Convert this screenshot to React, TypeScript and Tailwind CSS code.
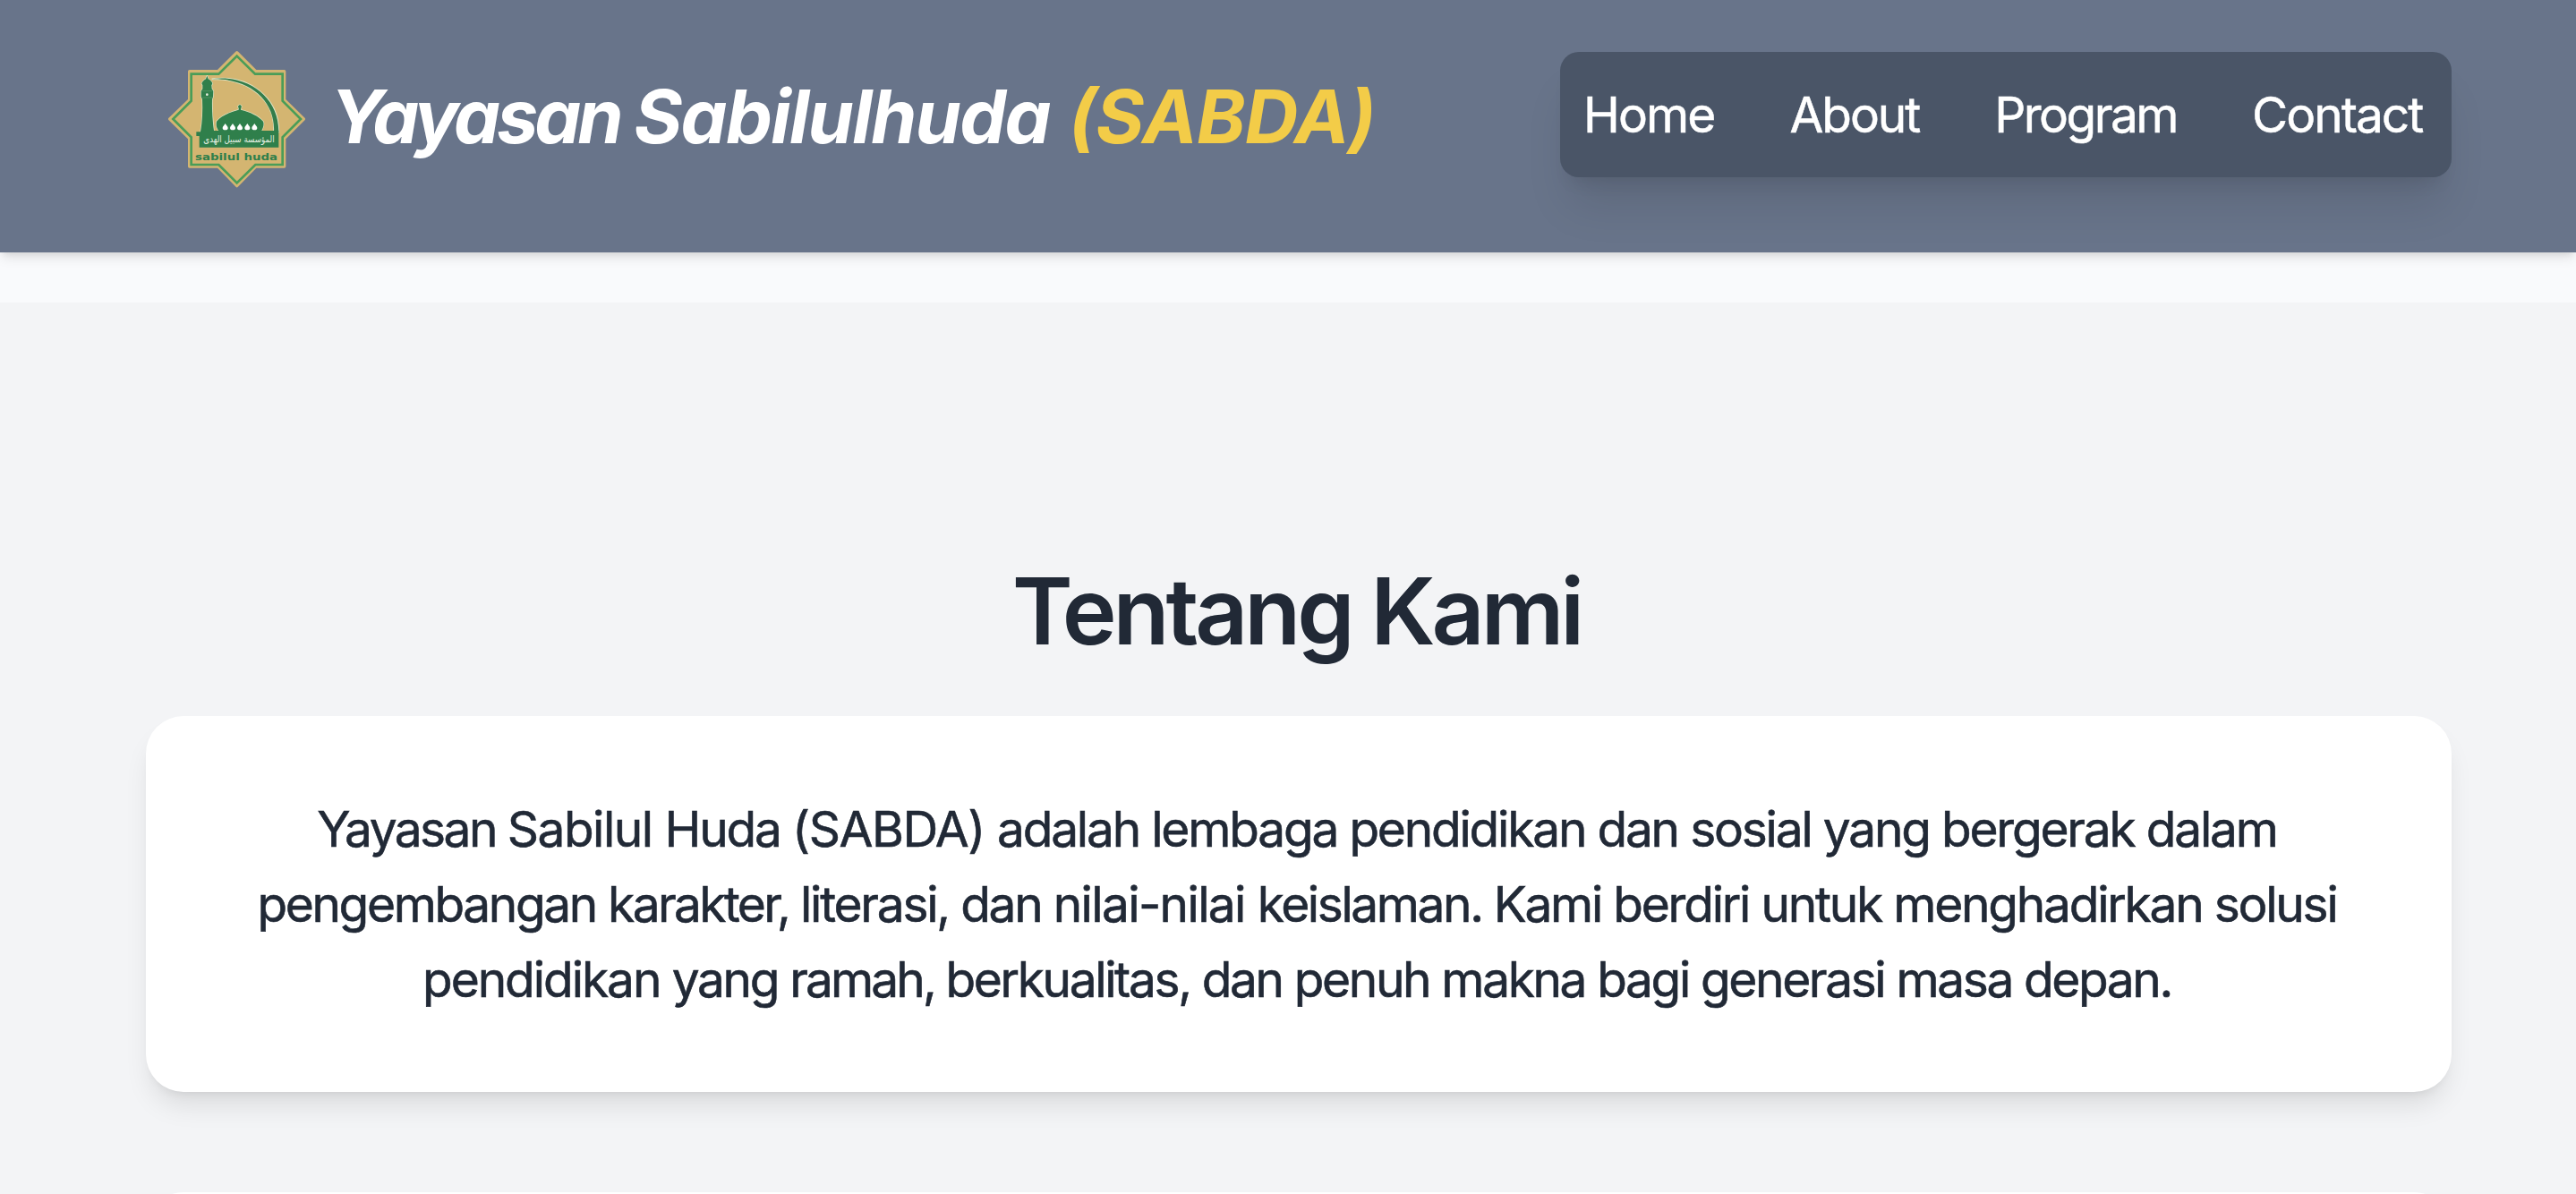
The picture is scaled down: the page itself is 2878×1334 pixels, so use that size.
import type { ReactNode } from "react";

function Logo() {
  return (
    <svg viewBox="54 48 462 462" className="h-[154px] w-[154px] shrink-0" role="img" aria-label="Logo Sabilul Huda">
      <path
        d="M284 56 347 119H443V215L508 279 443 344V438H347L284 503 221 438H125V344L59 279 125 215V119H221Z"
        fill="#d4b571"
        stroke="#d4b571"
        strokeWidth="10"
        strokeLinejoin="round"
      />
      <path
        d="M284 68 345 128H437V218L498 279 437 340V432H346L284 493 223 432H131V340L70 279 131 218V128H223Z"
        fill="none"
        stroke="#4a9d58"
        strokeWidth="8"
      />
      {/* crescent arch */}
      <path
        d="M200 145C320 128 425 205 424 322H408C414 220 330 142 200 145Z"
        fill="#347d4b"
        stroke="#dfe5c6"
        strokeWidth="5"
      />
      <path d="M200 145C320 128 425 205 424 322H408C414 220 330 142 200 145Z" fill="#347d4b" />
      {/* minaret and dome */}
      <g fill="#2f7f4b" stroke="#dfe5c6" strokeWidth="4" strokeLinejoin="round" className="[paint-order:stroke]">
        <path d="M184 134 188 145C196 149 200 154 202 160L199 166 200 178 205 185 204 205 201 212C200 250 203 288 207 318V336H162V322C168 288 170 250 168 212L164 205V185L169 178V166L166 160C168 154 173 149 180 145Z" />
        <path d="M294 231C299 233 301 238 298 242L297 248C328 256 356 268 372 287C376 297 372 309 366 320H224C214 307 214 297 216 287C232 268 260 256 290 248L290 242C286 238 289 233 294 231Z" />
      </g>
      <path d="M148 322H162L164 318H424V374H158V336H148Z" fill="#2f7f4b" />
      <path d="M166 185H203M167 207H203" stroke="#5f9c69" strokeWidth="2" />
      <circle cx="184" cy="197" r="4" fill="#e8eee0" />
      <g fill="#ffffff">
        <path d="M245 294C249 301 254 304 254 309A9 7 0 0 1 236 309C236 304 241 301 245 294Z" />
        <path d="M270 294C274 301 279 304 279 309A9 7 0 0 1 261 309C261 304 266 301 270 294Z" />
        <path d="M294 294C298 301 303 304 303 309A9 7 0 0 1 285 309C285 304 290 301 294 294Z" />
        <path d="M319 294C323 301 328 304 328 309A9 7 0 0 1 310 309C310 304 315 301 319 294Z" />
        <path d="M343 294C347 301 352 304 352 309A9 7 0 0 1 334 309C334 304 339 301 343 294Z" />
      </g>
      <text
        x="291"
        y="358"
        textAnchor="middle"
        textLength="238"
        lengthAdjust="spacingAndGlyphs"
        fill="#e6f0e4"
        className="font-['DejaVu_Sans',sans-serif] text-[31px]"
      >
        المؤسسة سبيل الهدى
      </text>
      <text
        x="144"
        y="416"
        textLength="276"
        lengthAdjust="spacingAndGlyphs"
        fill="#2f7f4b"
        className="font-['DejaVu_Sans',sans-serif] text-[34px] font-bold"
      >
        sabilul huda
      </text>
    </svg>
  );
}

function Card({ children }: { children?: ReactNode }) {
  return (
    <div className="h-[420px] w-full rounded-[42px] bg-white py-[84px] text-center shadow-[0_20px_30px_-6px_rgb(0_0_0/0.1),0_8px_12px_-8px_rgb(0_0_0/0.1)]">
      {children}
    </div>
  );
}

export default function App() {
  return (
    <div className="h-[1334px] w-full overflow-hidden bg-[#f9fafc] font-['Inter',sans-serif] text-[#212936]">
      <header className="h-[282px] w-full bg-[#68748a] shadow-[0_8px_12px_-2px_rgb(0_0_0/0.1),0_4px_8px_-4px_rgb(0_0_0/0.1)]">
        <div className="flex h-full items-start justify-between overflow-hidden pr-[139px] pl-[188px]">
          <div className="flex items-start pt-14">
            <Logo />
            <h1 className="mt-8 ml-[27px] flex text-[82.5px] leading-[84px] font-bold whitespace-nowrap text-white italic">
              <span className="w-[825px]">
                <span className="tracking-[-4px]">Yayasan </span>
                <span className="tracking-[-1.7px]">Sabilulhuda</span>
              </span>
              <span className="tracking-[-0.8px] text-[#f3cc48]">(SABDA)</span>
            </h1>
          </div>
          <nav className="mt-[58px] flex h-[140px] w-[996px] items-center gap-[84px] rounded-[21px] bg-[#4a5567] pl-[26px] text-[55px] leading-[84px] text-white shadow-[0_40px_50px_-10px_rgb(0_0_0/0.1),0_16px_20px_-12px_rgb(0_0_0/0.1)] [-webkit-text-stroke:0.5px]">
            <a className="tracking-[-1.9px]">Home</a>
            <a className="tracking-[-2.1px]">About</a>
            <a className="tracking-[-2.5px]">Program</a>
            <a className="tracking-[-2px]">Contact</a>
          </nav>
        </div>
      </header>

      <section className="mt-14 flex flex-col items-center bg-[#f3f4f6] pt-[292px] pr-[139px] pl-[163px]">
        <h2 className="mr-[5px] mb-[65px] text-[103px] leading-[105px] font-semibold tracking-[-4.1px]">
          Tentang Kami
        </h2>
        <Card>
          <p className="mr-[4px] flex flex-col items-center text-[55px] leading-[84px] whitespace-nowrap [-webkit-text-stroke:0.6px]">
            <span className="tracking-[-2.2px]">
              <span className="tracking-[-2.55px]">Yayasan </span>
              <span className="tracking-[-1.5px]">Sabilul </span>
              Huda <span className="tracking-[-1.45px]">(SABDA) </span>
              adalah lembaga pendidikan dan sosial yang bergerak dalam
            </span>
            <span className="tracking-[-2.23px]">
              <span className="tracking-[-2.37px]">pengembangan </span>
              <span className="tracking-[-2.6px]">karakter, </span>
              literasi, dan <span className="tracking-[-1.63px]">nilai-nilai </span>
              <span className="tracking-[-2.4px]">keislaman. </span>
              Kami berdiri untuk menghadirkan solusi
            </span>
            <span className="tracking-[-2.37px]">
              <span className="tracking-[-2.05px]">pendidikan </span>
              yang <span className="tracking-[-2.87px]">ramah, </span>
              berkualitas, dan penuh makna bagi generasi masa depan.
            </span>
          </p>
        </Card>
        <div className="mt-28 w-full">
          <Card />
        </div>
      </section>
    </div>
  );
}
